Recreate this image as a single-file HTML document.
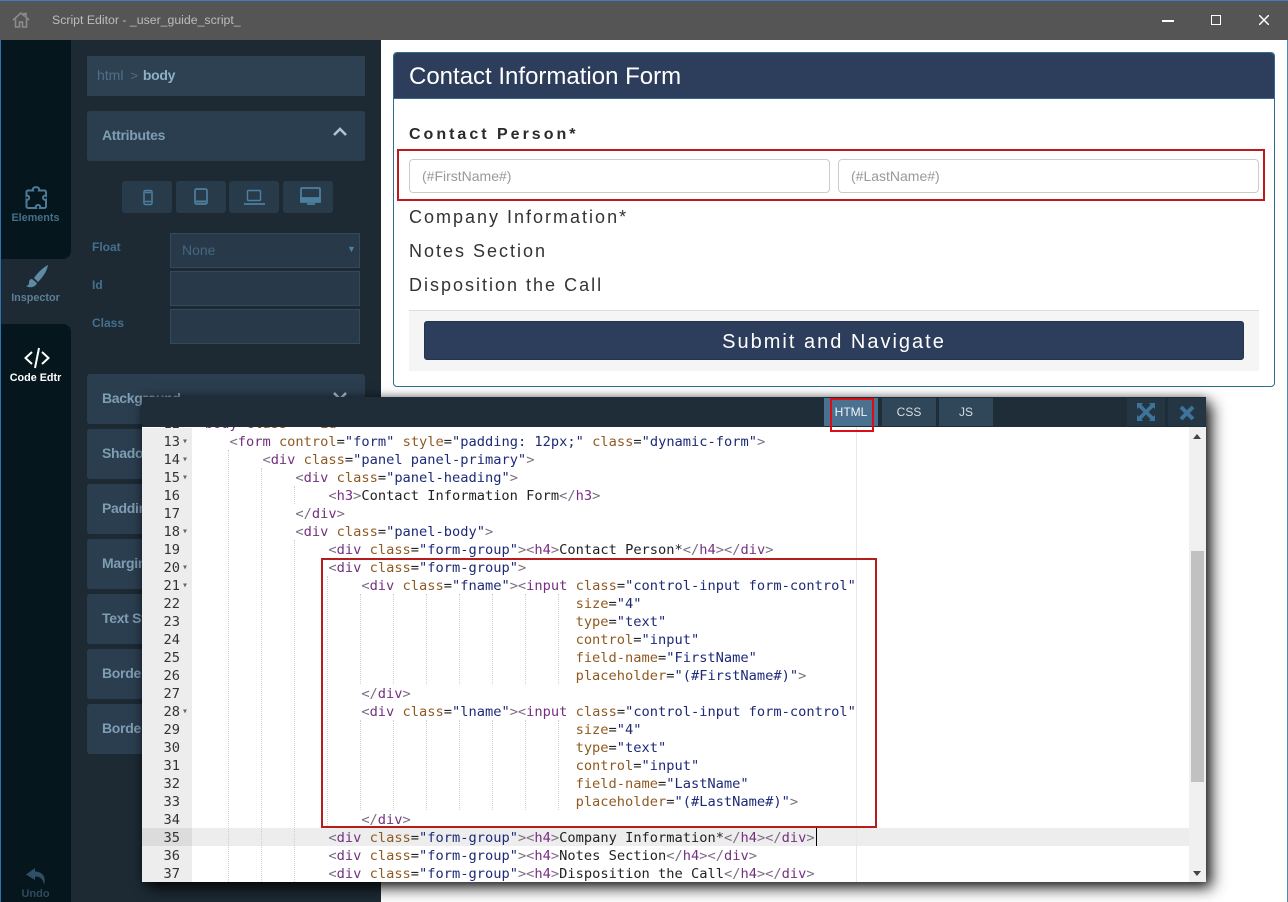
<!DOCTYPE html>
<html><head><meta charset="utf-8"><title>Script Editor</title>
<style>
*{box-sizing:border-box}
html,body{margin:0;padding:0;width:1288px;height:902px;overflow:hidden;background:#fff;font-family:"Liberation Sans",sans-serif}
.abs,.p,.lbl,.inp,.dev,.g{position:absolute}
.p{left:87px;width:278px;height:50px;background:#2b3e4f;border-radius:3px;color:#7f9db2;font-size:14px;font-weight:bold;line-height:48px;padding-left:15px;letter-spacing:-.3px}
.lbl{left:92px;font-size:12px;font-weight:bold;color:#44708e}
.inp{left:170px;width:190px;height:35px;background:#283a4a;border:1px solid #35495b}
.dev{top:181px;width:50px;height:32px;background:#283b4a;border-radius:3px}
.rail{position:absolute;left:0;width:71px;text-align:center;font-size:11px;font-weight:bold}
.h4{position:absolute;left:409px;font-size:18px;letter-spacing:2px;color:#333;line-height:20px}
.fi{position:absolute;top:159px;width:421px;height:34px;border:1px solid #ccc;border-radius:4px;color:#999;font-size:14px;line-height:32px;padding-left:12px;background:#fff}
.tab{position:absolute;top:398px;width:54px;height:28px;background:#2f4759;color:#d5dde3;font-size:12px;text-align:center;line-height:28px;z-index:10}
pre{position:absolute;margin:0;font-family:"DejaVu Sans Mono","Liberation Mono",monospace;font-size:13.7px;line-height:18px;white-space:pre}
.t{color:#74307f}.a{color:#8f5a22}.s{color:#1d2a78}.d{color:#222}.b{color:#7d6d83}
.g{width:0;border-left:1px dotted #d0d0d0}
.z{z-index:10}
</style></head><body>

<!-- title bar -->
<div class="abs" style="left:0;top:0;width:1288px;height:40px;background:#555;border-top:1px solid #3c7cc4"></div>
<svg class="abs" style="left:12px;top:11px" width="18" height="18" viewBox="0 0 18 18"><path d="M1 9 9 2l3 2.600V2.500h2v3.900L17 9M3.500 8v8h4v-5h3v5h4V8" fill="none" stroke="#8c8c8c" stroke-width="1.600"/></svg>
<div class="abs" style="left:52px;top:13px;font-size:12.300px;color:#bdbdbd;line-height:15px">Script Editor - _user_guide_script_</div>
<div class="abs" style="left:1162px;top:20px;width:12px;height:2px;background:#fff"></div>
<div class="abs" style="left:1211px;top:15px;width:10px;height:10px;border:1px solid #fff"></div>
<svg class="abs" style="left:1259px;top:15px" width="10" height="10" viewBox="0 0 10 10"><path d="M0 0 10 10M10 0 0 10" stroke="#fff" stroke-width="1.500"/></svg>

<!-- left panel -->
<div class="abs" style="left:0;top:40px;width:381px;height:862px;background:#1d2a34"></div>
<div class="abs" style="left:0;top:40px;width:71px;height:219px;background:#06161d;border-bottom-right-radius:8px"></div>
<div class="abs" style="left:0;top:324px;width:71px;height:578px;background:#06161d;border-top-right-radius:8px"></div>
<div class="abs" style="left:0;top:40px;width:1px;height:862px;background:#2f6fb5"></div>

<div class="rail" style="top:184px;color:#44708a">
<svg width="24" height="27" viewBox="0 0 24 27" style="display:block;margin:0 auto 0 24px"><path d="M9 6.500C7.500 2 16.500 2 15 6.500h5.500a1.500 1.500 0 0 1 1.500 1.500v4c-4-1.500-4 5 0 3.500v7a1.500 1.500 0 0 1-1.500 1.500H16c1.500-4-5.500-4-4 0H4a1.500 1.500 0 0 1-1.500-1.500v-7c3.500 1.500 3.500-5 0-3.500V8A1.500 1.500 0 0 1 4 6.500z" fill="none" stroke="#4d7b97" stroke-width="2"/></svg>
<div style="margin-top:0;line-height:14px;font-size:10.800px">Elements</div></div>

<div class="rail" style="top:264px;color:#5b7f96">
<svg width="28" height="26" viewBox="0 0 28 26" style="display:block;margin:0 auto 0 22px"><path d="M26 1C22 3 16 8 12 14l4 4C21 13 25 7 26 1zM10 15c-3 0-3 3-3 4s-1 3-3 3c3 2 9 2 11-3z" fill="#5f8aa5"/></svg>
<div style="margin-top:0;line-height:14px;position:relative;top:1px;font-size:10.800px">Inspector</div></div>

<div class="rail" style="top:347px;color:#fff">
<svg width="28" height="22" viewBox="0 0 28 22" style="display:block;margin:0 auto 0 23px"><path d="M9 5 2.500 11 9 17M19 5 25.500 11 19 17" fill="none" stroke="#fff" stroke-width="2"/><path d="M16 1 12 21" stroke="#fff" stroke-width="2"/></svg>
<div style="line-height:14px;margin-top:2px;font-size:10.800px">Code Edtr</div></div>

<svg class="abs" style="left:25px;top:867px" width="22" height="19" viewBox="0 0 22 19"><path d="M10 1 1 7.500 10 13V9.500c5 0 8 2 9 8.500 2-7 0-13-9-13.500z" fill="#2f4f66"/></svg>
<div class="rail" style="top:887px;color:#2f4a5c;font-size:11px;line-height:14px">Undo</div>

<div class="abs" style="left:87px;top:56px;width:278px;height:40px;background:#2d4152;font-size:14px;line-height:39px;padding-left:10px;color:#4f7087">html <span style="font-size:13px;margin:0 1px 0 3px">&gt;</span> <b style="color:#8fb0c6;letter-spacing:-.3px">body</b></div>

<div class="p" style="top:111px;height:50px">Attributes</div>
<svg class="abs" style="left:333px;top:127px" width="14" height="10" viewBox="0 0 14 10"><path d="M1 8 7 2l6 6" fill="none" stroke="#a9c2d4" stroke-width="2.600"/></svg>

<div class="dev" style="left:122px"></div><div class="dev" style="left:176px"></div><div class="dev" style="left:229px"></div><div class="dev" style="left:283px"></div>
<svg class="abs" style="left:122px;top:181px" width="211" height="32" viewBox="0 0 211 32" fill="none" stroke="#4d7f9f">
<rect x="22" y="9.500" width="8" height="14" rx="1.500" stroke-width="1.500"/><path d="M23 11.500h6M23 20.500h6" stroke-width="1.500"/>
<rect x="73" y="8" width="12" height="15" rx="1.500" stroke-width="1.700"/><path d="M74 20.500h10" stroke-width="2"/>
<rect x="125.500" y="9.500" width="13" height="10" rx="1" stroke-width="1.400"/><path d="M122 23h21" stroke-width="1.800"/>
<rect x="179" y="7" width="19" height="13" rx="1" stroke-width="1.800"/><path d="M179 17h19V21H179zM185 23h8" fill="#4d7f9f" stroke-width="1.800"/>
</svg>

<div class="lbl" style="top:240px">Float</div>
<div class="lbl" style="top:278px">Id</div>
<div class="lbl" style="top:316px">Class</div>
<div class="inp" style="top:233px;color:#45667e;font-size:14px;line-height:33px;padding-left:11px">None<span style="position:absolute;left:176px;top:-1px;font-size:9px;color:#4d7f9f">&#9660;</span></div>
<div class="inp" style="top:271px"></div>
<div class="inp" style="top:309px"></div>

<div class="p" style="top:374px">Background</div>
<div class="p" style="top:429px">Shadow</div>
<div class="p" style="top:484px">Padding</div>
<div class="p" style="top:539px">Margin</div>
<div class="p" style="top:594px">Text Style</div>
<div class="p" style="top:649px">Border</div>
<div class="p" style="top:704px">Border Radius</div>
<svg class="abs" style="left:333px;top:391px" width="14" height="10" viewBox="0 0 14 10"><path d="M1 2 7 8l6-6" fill="none" stroke="#a9c2d4" stroke-width="2.600"/></svg>

<!-- right preview -->
<div class="abs" style="left:381px;top:40px;width:906px;height:862px;background:#fff"></div>
<div class="abs" style="left:1287px;top:40px;width:1px;height:862px;background:#4a8ab5"></div>
<div class="abs" style="left:393px;top:52px;width:882px;height:335px;border:1px solid #2f6d8f;border-radius:4px;background:#fff"></div>
<div class="abs" style="left:394px;top:53px;width:880px;height:46px;background:#2d3e5c;border-radius:3px 3px 0 0;border-bottom:1px solid #3a6a8c;color:#fff;font-size:24px;line-height:47px;padding-left:15px">Contact Information Form</div>
<div class="h4" style="top:125px;font-weight:bold;font-size:16px;letter-spacing:3px;color:#2a2a2a">Contact Person*</div>
<div class="fi" style="left:409px">(#FirstName#)</div>
<div class="fi" style="left:838px">(#LastName#)</div>
<div class="h4" style="top:207px">Company Information*</div>
<div class="h4" style="top:241px">Notes Section</div>
<div class="h4" style="top:275px">Disposition the Call</div>
<div class="abs" style="left:409px;top:310px;width:850px;height:61px;background:#f5f5f5;border-top:1px solid #ddd"></div>
<div class="abs" style="left:424px;top:321px;width:820px;height:39px;background:#2d3e5c;border:1px solid #25344e;border-radius:3px;color:#fff;font-size:20px;letter-spacing:2px;text-align:center;line-height:40px">Submit and Navigate</div>
<div class="abs" style="left:397px;top:149px;width:868px;height:52px;border:2px solid #c0181f"></div>

<!-- modal -->
<div class="abs" style="left:142px;top:397px;width:1064px;height:485px;background:#fff;box-shadow:6px 6px 14px rgba(0,0,0,.85),0 0 8px rgba(0,0,0,.35);overflow:hidden">
<div class="abs" style="left:0;top:31px;width:50px;height:454px;background:#ededed"></div>
<div class="abs" style="left:0;top:431px;width:1047px;height:18px;background:#ededed"></div>
<div class="abs" style="left:0;top:431px;width:50px;height:18px;background:#dcdcdc"></div>
<div class="abs" style="left:714px;top:30px;width:1px;height:455px;background:#e8e8e8"></div>
<div class="abs" style="left:674px;top:431px;width:1px;height:18px;background:#000"></div>
<div class="abs" style="left:1047px;top:30px;width:17px;height:455px;background:#f0f0f0"></div>
<div class="abs" style="left:1049px;top:154px;width:13px;height:231px;background:#c1c1c1"></div>
<div class="abs" style="left:1051px;top:37px;width:0;height:0;border:4px solid transparent;border-top:0;border-bottom:5px solid #444"></div>
<div class="abs" style="left:1051px;top:474px;width:0;height:0;border:4px solid transparent;border-bottom:0;border-top:5px solid #444"></div>

<!-- indent guides, coordinates relative to modal -->
<div class="g" style="left:86px;top:53px;height:432px"></div>
<div class="g" style="left:119px;top:71px;height:414px"></div>
<div class="g" style="left:152px;top:89px;height:18px"></div>
<div class="g" style="left:152px;top:143px;height:342px"></div>
<div class="g" style="left:185px;top:179px;height:252px"></div>
<div class="g" style="left:218px;top:197px;height:90px"></div><div class="g" style="left:218px;top:323px;height:90px"></div>
<div class="g" style="left:251px;top:197px;height:90px"></div><div class="g" style="left:251px;top:323px;height:90px"></div>
<div class="g" style="left:284px;top:197px;height:90px"></div><div class="g" style="left:284px;top:323px;height:90px"></div>
<div class="g" style="left:317px;top:197px;height:90px"></div><div class="g" style="left:317px;top:323px;height:90px"></div>
<div class="g" style="left:350px;top:197px;height:90px"></div><div class="g" style="left:350px;top:323px;height:90px"></div>
<div class="g" style="left:383px;top:197px;height:90px"></div><div class="g" style="left:383px;top:323px;height:90px"></div>
<div class="g" style="left:416px;top:197px;height:90px"></div><div class="g" style="left:416px;top:323px;height:90px"></div>

<pre style="left:20px;top:18px;width:18px;color:#333;text-align:right">12
13
14
15
16
17
18
19
20
21
22
23
24
25
26
27
28
29
30
31
32
33
34
35
36
37</pre>
<pre style="left:40px;top:18px;color:#666;font-size:10px">

&#9662;
&#9662;
&#9662;


&#9662;

&#9662;
&#9662;






&#9662;</pre>
<pre style="left:54.500px;top:18px"><span class="b">&lt;</span><span class="t">body</span> <span class="a">class</span><span class="d">=</span><span class="s">""</span> <span class="a">id</span><span class="d">=</span><span class="s">""</span><span class="b">&gt;</span>
    <span class="b">&lt;</span><span class="t">form</span> <span class="a">control</span><span class="d">=</span><span class="s">"form"</span> <span class="a">style</span><span class="d">=</span><span class="s">"padding: 12px;"</span> <span class="a">class</span><span class="d">=</span><span class="s">"dynamic-form"</span><span class="b">&gt;</span>
        <span class="b">&lt;</span><span class="t">div</span> <span class="a">class</span><span class="d">=</span><span class="s">"panel panel-primary"</span><span class="b">&gt;</span>
            <span class="b">&lt;</span><span class="t">div</span> <span class="a">class</span><span class="d">=</span><span class="s">"panel-heading"</span><span class="b">&gt;</span>
                <span class="b">&lt;</span><span class="t">h3</span><span class="b">&gt;</span><span class="d">Contact Information Form</span><span class="b">&lt;/</span><span class="t">h3</span><span class="b">&gt;</span>
            <span class="b">&lt;/</span><span class="t">div</span><span class="b">&gt;</span>
            <span class="b">&lt;</span><span class="t">div</span> <span class="a">class</span><span class="d">=</span><span class="s">"panel-body"</span><span class="b">&gt;</span>
                <span class="b">&lt;</span><span class="t">div</span> <span class="a">class</span><span class="d">=</span><span class="s">"form-group"</span><span class="b">&gt;&lt;</span><span class="t">h4</span><span class="b">&gt;</span><span class="d">Contact Person*</span><span class="b">&lt;/</span><span class="t">h4</span><span class="b">&gt;&lt;/</span><span class="t">div</span><span class="b">&gt;</span>
                <span class="b">&lt;</span><span class="t">div</span> <span class="a">class</span><span class="d">=</span><span class="s">"form-group"</span><span class="b">&gt;</span>
                    <span class="b">&lt;</span><span class="t">div</span> <span class="a">class</span><span class="d">=</span><span class="s">"fname"</span><span class="b">&gt;&lt;</span><span class="t">input</span> <span class="a">class</span><span class="d">=</span><span class="s">"control-input form-control"</span>
                                              <span class="a">size</span><span class="d">=</span><span class="s">"4"</span>
                                              <span class="a">type</span><span class="d">=</span><span class="s">"text"</span>
                                              <span class="a">control</span><span class="d">=</span><span class="s">"input"</span>
                                              <span class="a">field-name</span><span class="d">=</span><span class="s">"FirstName"</span>
                                              <span class="a">placeholder</span><span class="d">=</span><span class="s">"(#FirstName#)"</span><span class="b">&gt;</span>
                    <span class="b">&lt;/</span><span class="t">div</span><span class="b">&gt;</span>
                    <span class="b">&lt;</span><span class="t">div</span> <span class="a">class</span><span class="d">=</span><span class="s">"lname"</span><span class="b">&gt;&lt;</span><span class="t">input</span> <span class="a">class</span><span class="d">=</span><span class="s">"control-input form-control"</span>
                                              <span class="a">size</span><span class="d">=</span><span class="s">"4"</span>
                                              <span class="a">type</span><span class="d">=</span><span class="s">"text"</span>
                                              <span class="a">control</span><span class="d">=</span><span class="s">"input"</span>
                                              <span class="a">field-name</span><span class="d">=</span><span class="s">"LastName"</span>
                                              <span class="a">placeholder</span><span class="d">=</span><span class="s">"(#LastName#)"</span><span class="b">&gt;</span>
                    <span class="b">&lt;/</span><span class="t">div</span><span class="b">&gt;</span>
                <span class="b">&lt;</span><span class="t">div</span> <span class="a">class</span><span class="d">=</span><span class="s">"form-group"</span><span class="b">&gt;&lt;</span><span class="t">h4</span><span class="b">&gt;</span><span class="d">Company Information*</span><span class="b">&lt;/</span><span class="t">h4</span><span class="b">&gt;&lt;/</span><span class="t">div</span><span class="b">&gt;</span>
                <span class="b">&lt;</span><span class="t">div</span> <span class="a">class</span><span class="d">=</span><span class="s">"form-group"</span><span class="b">&gt;&lt;</span><span class="t">h4</span><span class="b">&gt;</span><span class="d">Notes Section</span><span class="b">&lt;/</span><span class="t">h4</span><span class="b">&gt;&lt;/</span><span class="t">div</span><span class="b">&gt;</span>
                <span class="b">&lt;</span><span class="t">div</span> <span class="a">class</span><span class="d">=</span><span class="s">"form-group"</span><span class="b">&gt;&lt;</span><span class="t">h4</span><span class="b">&gt;</span><span class="d">Disposition the Call</span><span class="b">&lt;/</span><span class="t">h4</span><span class="b">&gt;&lt;/</span><span class="t">div</span><span class="b">&gt;</span></pre>
<div class="abs" style="left:179px;top:161px;width:556px;height:270px;border:2px solid #b71c1c"></div>
<div class="abs" style="left:0;top:0;width:1064px;height:30px;background:#1f2d38"></div>
</div>

<!-- modal header controls -->
<div class="tab" style="left:824px;background:#4a7190;color:#f0f4f7">HTML</div>
<div class="tab" style="left:882px">CSS</div>
<div class="tab" style="left:939px">JS</div>
<div class="abs z" style="left:1127px;top:398px;width:38px;height:28px;background:#243644"></div>
<div class="abs z" style="left:1168px;top:398px;width:38px;height:28px;background:#243644"></div>
<svg class="abs z" style="left:1137px;top:403px" width="18" height="18" viewBox="0 0 18 18"><path d="M0 0h6L4.500 1.800 9 6.500 13.500 1.800 12 0h6v6l-1.800-1.500L11.500 9l4.700 4.500L18 12v6h-6l1.500-1.800L9 11.500 4.500 16.200 6 18H0v-6l1.800 1.500L6.500 9 1.800 4.500 0 6z" fill="#3e7499"/></svg>
<svg class="abs z" style="left:1179px;top:405px" width="16" height="16" viewBox="0 0 16 16"><path d="M2 2 14 14M14 2 2 14" stroke="#3e7499" stroke-width="4"/></svg>
<div class="abs z" style="left:830px;top:398px;width:44px;height:34px;border:2px solid #d80f16"></div>
</body></html>
